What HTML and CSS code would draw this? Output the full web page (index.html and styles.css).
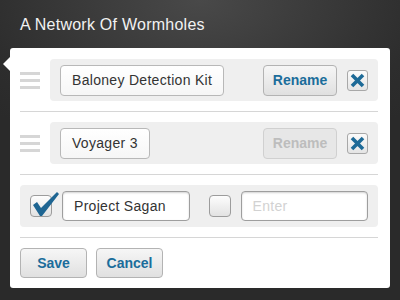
FILE: index.html
```html
<!DOCTYPE html>
<html lang="en">
<head>
    <meta charset="UTF-8">
    <meta name="viewport" content="width=device-width, initial-scale=1.0">
    <title>A Network Of Wormholes</title>
    <link rel="stylesheet" href="styles.css">
</head>
<body>
    <header class="top">
        <h1>A Network Of Wormholes</h1>
    </header>

    <div class="panel">
        <div class="block">
            <div class="item">
                <span class="handle"><i></i><i></i><i></i></span>
                <div class="row">
                    <div class="field">Baloney Detection Kit</div>
                    <button class="btn rename">Rename</button>
                    <button class="remove">
                        <svg width="21" height="21" viewBox="0 0 21 21"><path d="M5 5 L16 16 M16 5 L5 16"/></svg>
                    </button>
                </div>
            </div>
        </div>

        <div class="block">
            <div class="item">
                <span class="handle"><i></i><i></i><i></i></span>
                <div class="row">
                    <div class="field">Voyager 3</div>
                    <button class="btn rename" disabled>Rename</button>
                    <button class="remove">
                        <svg width="21" height="21" viewBox="0 0 21 21"><path d="M5 5 L16 16 M16 5 L5 16"/></svg>
                    </button>
                </div>
            </div>
        </div>

        <div class="block">
            <div class="row new-row">
                <div class="new-item">
                    <span class="check checked">
                        <svg width="28" height="26" viewBox="0 0 28 26"><polygon points="1,13 5,10 9,16 25,0 27,2 10,24 8,24"/></svg>
                    </span>
                    <div class="field wide">Project Sagan</div>
                </div>
                <div class="new-item">
                    <span class="check"></span>
                    <div class="field wide empty">Enter</div>
                </div>
            </div>
        </div>

        <div class="actions">
            <button class="btn">Save</button>
            <button class="btn">Cancel</button>
        </div>
    </div>
</body>
</html>
```

FILE: styles.css
```css
body {
    margin: 0;
    padding: 0;
    height: 300px;
    overflow: hidden;
    font-family: "Liberation Sans", Arial, sans-serif;
    background: radial-gradient(ellipse 70% 55% at 50% 0, #494949, #2d2d2d 80%, #2a2a2a);
}
.top {
    height: 48px;
    box-sizing: border-box;
    padding: 16px 20px 0;
}
.top h1 {
    margin: 0;
    font-size: 16px;
    font-weight: normal;
    letter-spacing: 0.25px;
    color: #f2f2f2;
}
.panel {
    position: relative;
    margin: 0 10px;
    padding: 1px 12px 0 10px;
    background-color: #fff;
    border-radius: 3px;
}
/* little pointer on the left side */
.panel::before {
    content: "";
    position: absolute;
    left: -7px;
    top: 9px;
    border-style: solid;
    border-width: 7px 7px 7px 0;
    border-color: transparent #fff transparent transparent;
}
.block {
    padding: 10px 0;
    border-bottom: 1px solid #d6d6d6;
}
.item {
    display: flex;
    align-items: center;
}
.handle {
    width: 20px;
    margin-right: 10px;
    display: flex;
    flex-direction: column;
    gap: 4px;
}
.handle i {
    display: block;
    height: 3px;
    background-color: #d6d6d6;
}
.row {
    flex: 1;
    height: 42px;
    display: flex;
    align-items: center;
    padding: 0 10px;
    background-color: #efefef;
    border-radius: 4px;
}
.field {
    height: 31px;
    box-sizing: border-box;
    padding: 0 11px;
    display: flex;
    align-items: center;
    font-size: 14px;
    letter-spacing: 0.3px;
    color: #333;
    background: linear-gradient(#fff, #f6f6f6);
    border: 1px solid #b8b8b8;
    border-radius: 4px;
}
.btn {
    height: 30px;
    width: 67px;
    padding: 0;
    font-family: inherit;
    font-size: 14px;
    font-weight: bold;
    color: #1b6d9b;
    background: linear-gradient(#f6f6f6, #e0e0e0);
    border: 1px solid #b3b3b3;
    border-radius: 4px;
}
.rename {
    margin-left: auto;
    width: 74px;
    height: 31px;
}
.rename:disabled {
    color: #bdbdbd;
    background: #e7e7e7;
    border-color: #d0d0d0;
}
.remove {
    margin-left: 10px;
    width: 21px;
    height: 21px;
    padding: 0;
    display: flex;
    background: linear-gradient(#fbfbfb, #e4e4e4);
    border: 1px solid #a8a8a8;
    border-radius: 3px;
}
.remove svg {
    margin: -1px;
}
.remove path {
    stroke: #1d6a97;
    stroke-width: 3.6;
    fill: none;
}
.new-row {
    gap: 19px;
}
.new-item {
    flex: 1;
    display: flex;
    align-items: center;
    gap: 10px;
}
.new-item .wide {
    flex: 1;
    height: 30px;
    background: #fff;
    border-color: #9e9e9e;
    box-shadow: inset 0 1px 2px rgba(0, 0, 0, 0.18);
}
.check {
    position: relative;
    flex: none;
    width: 22px;
    height: 22px;
    box-sizing: border-box;
    background: linear-gradient(#fdfdfd, #e2e2e2);
    border: 1px solid #9c9c9c;
    border-radius: 4px;
}
.check svg {
    position: absolute;
    left: 1px;
    top: -4px;
}
.check polygon {
    fill: #1e6592;
}
.new-item .empty {
    color: #d2d2d2;
}
.actions {
    display: flex;
    gap: 9px;
    padding: 10px 0;
}
```
